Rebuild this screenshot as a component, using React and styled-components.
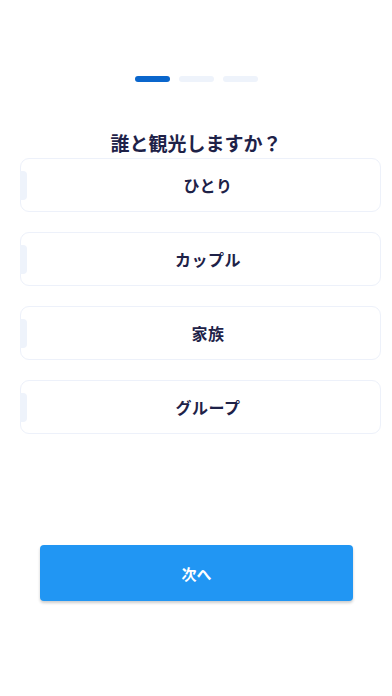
import React from 'react'
import styled, { createGlobalStyle } from 'styled-components'

const GlobalStyle = createGlobalStyle`
  html, body {
    margin: 0;
    padding: 0;
    background: #ffffff;
    font-family: "Noto Sans CJK JP", "Noto Sans", sans-serif;
  }
`

const options = ['ひとり', 'カップル', '家族', 'グループ']

export default function App() {
  return (
    <>
      <GlobalStyle />
      <Page>
        <Steps>
          <Step active />
          <Step />
          <Step />
        </Steps>
        <Title>誰と観光しますか？</Title>
        <List>
          {options.map((label) => (
            <Card key={label}>
              <Tab />
              <Label>{label}</Label>
            </Card>
          ))}
        </List>
        <Footer>
          <NextButton>次へ</NextButton>
        </Footer>
      </Page>
    </>
  )
}

const Page = styled.div`
  width: 392px;
  height: 696px;
  display: flex;
  flex-direction: column;
  box-sizing: border-box;
  padding-top: 76px;
`

const Steps = styled.div`
  display: flex;
  justify-content: center;
  gap: 9px;
`

const Step = styled.div`
  width: 35px;
  height: 6px;
  border-radius: 3px;
  background: ${(p) => (p.active ? '#0a66cc' : '#eef3fb')};
`

const Title = styled.h1`
  margin: 49px 0 0;
  font-size: 19px;
  line-height: 24px;
  font-weight: 700;
  color: #1e2248;
  text-align: center;
`

const List = styled.div`
  display: flex;
  flex-direction: column;
  gap: 20px;
  margin-top: 3px;
  padding-left: 20px;
`

const Card = styled.div`
  position: relative;
  width: 361px;
  height: 54px;
  box-sizing: border-box;
  border: 1px solid #edf1fa;
  border-radius: 9px;
  background: #ffffff;
  display: flex;
  align-items: center;
  justify-content: center;
  padding-left: 15px;
`

const Tab = styled.div`
  position: absolute;
  left: -1px;
  top: 12px;
  width: 7px;
  height: 29px;
  border-radius: 0 4px 4px 0;
  background: #eef3fb;
`

const Label = styled.span`
  font-size: 16px;
  font-weight: 700;
  color: #1e2248;
  letter-spacing: 0.5px;
`

const Footer = styled.div`
  margin-top: auto;
  padding: 0 40px 95px;
`

const NextButton = styled.button`
  width: 313px;
  height: 56px;
  border: none;
  border-radius: 4px;
  background: #2196f3;
  color: #ffffff;
  font-family: inherit;
  font-size: 15px;
  font-weight: 700;
  box-shadow: 0 2px 3px rgba(0, 0, 0, 0.2);
`
